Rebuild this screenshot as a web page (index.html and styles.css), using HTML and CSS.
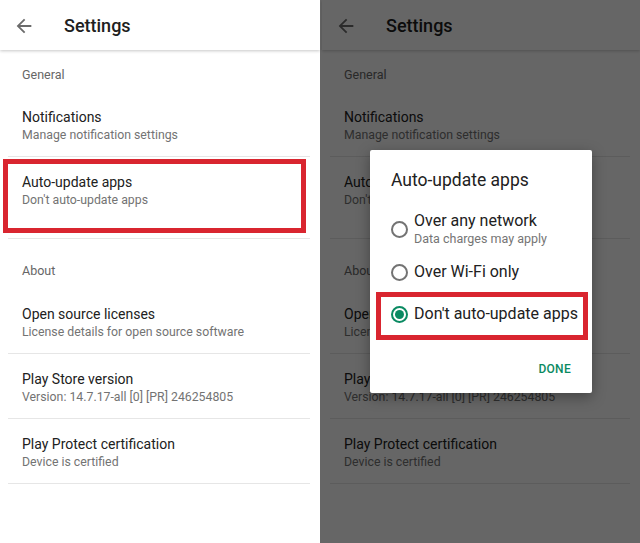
FILE: index.html
```html
<!DOCTYPE html>
<html lang="en">
<head>
  <meta charset="UTF-8">
  <meta name="viewport" content="width=device-width, initial-scale=1.0">
  <title>Settings</title>
  <link rel="stylesheet" href="styles.css">
</head>
<body>
  <!-- Left screen: settings list -->
  <div class="screen">
    <div class="appbar">
      <svg class="back" viewBox="0 0 24 24"><path d="M20 11H7.83l5.59-5.59L12 4l-8 8 8 8 1.41-1.41L7.83 13H20v-2z"/></svg>
      <div class="appbar-title">Settings</div>
    </div>
    <div class="section">General</div>
    <div class="item">
      <div class="item-title">Notifications</div>
      <div class="item-sub">Manage notification settings</div>
    </div>
    <div class="item tall highlight">
      <div class="item-title">Auto-update apps</div>
      <div class="item-sub">Don't auto-update apps</div>
    </div>
    <div class="section about">About</div>
    <div class="item">
      <div class="item-title">Open source licenses</div>
      <div class="item-sub">License details for open source software</div>
    </div>
    <div class="item">
      <div class="item-title">Play Store version</div>
      <div class="item-sub">Version: 14.7.17-all [0] [PR] 246254805</div>
    </div>
    <div class="item">
      <div class="item-title">Play Protect certification</div>
      <div class="item-sub">Device is certified</div>
    </div>
  </div>

  <!-- Right screen: same list with the dialog open -->
  <div class="screen dimmed">
    <div class="appbar">
      <svg class="back" viewBox="0 0 24 24"><path d="M20 11H7.83l5.59-5.59L12 4l-8 8 8 8 1.41-1.41L7.83 13H20v-2z"/></svg>
      <div class="appbar-title">Settings</div>
    </div>
    <div class="section">General</div>
    <div class="item">
      <div class="item-title">Notifications</div>
      <div class="item-sub">Manage notification settings</div>
    </div>
    <div class="item tall">
      <div class="item-title">Auto-update apps</div>
      <div class="item-sub">Don't auto-update apps</div>
    </div>
    <div class="section about">About</div>
    <div class="item">
      <div class="item-title">Open source licenses</div>
      <div class="item-sub">License details for open source software</div>
    </div>
    <div class="item">
      <div class="item-title">Play Store version</div>
      <div class="item-sub">Version: 14.7.17-all [0] [PR] 246254805</div>
    </div>
    <div class="item">
      <div class="item-title">Play Protect certification</div>
      <div class="item-sub">Device is certified</div>
    </div>

    <div class="scrim"></div>

    <div class="dialog">
      <div class="dialog-title">Auto-update apps</div>
      <div class="options">
        <div class="option two-line">
          <span class="radio"></span>
          <div>
            <div class="option-label">Over any network</div>
            <div class="option-sub">Data charges may apply</div>
          </div>
        </div>
        <div class="option">
          <span class="radio"></span>
          <div class="option-label">Over Wi-Fi only</div>
        </div>
        <div class="option highlight">
          <span class="radio checked"></span>
          <div class="option-label">Don't auto-update apps</div>
        </div>
      </div>
      <div class="actions">
        <span class="done">DONE</span>
      </div>
    </div>
  </div>
</body>
</html>
```

FILE: styles.css
```css
body {
  margin: 0;
  display: flex;
  width: 640px;
  height: 543px;
  overflow: hidden;
  font-family: Roboto, "Noto Sans", sans-serif;
  background-color: #fff;
}
.screen {
  position: relative;
  width: 320px;
  height: 543px;
  background-color: #fff;
  overflow: hidden;
}
.screen.dimmed {
  padding-left: 2px;
  box-sizing: border-box;
}

/* App bar */
.appbar {
  display: flex;
  align-items: center;
  height: 50px;
  padding-top: 1px;
  box-sizing: border-box;
  box-shadow: 0 1px 3px rgba(0, 0, 0, 0.22);
}
.back {
  width: 22px;
  height: 22px;
  margin-left: 13px;
  fill: #6b6b6b;
}
.appbar-title {
  margin-left: 29px;
  font-size: 18px;
  font-weight: 500;
  color: #202020;
}

/* List */
.section {
  padding: 17px 0 9px 22px;
  font-size: 12.5px;
  line-height: 16px;
  color: #666;
}
.section.about {
  padding-top: 24px;
  padding-bottom: 10px;
}
.item {
  position: relative;
  margin: 0 10px 0 8px;
  padding: 15px 0 13px 14px;
  border-bottom: 1px solid #e6e6e6;
}
.item.tall {
  padding-bottom: 30px;
}
.item-title {
  font-size: 14px;
  line-height: 20px;
  color: #212121;
}
.item-sub {
  font-size: 12.3px;
  line-height: 16px;
  color: #737373;
}

/* Red highlight boxes */
.highlight::after {
  content: "";
  position: absolute;
  border: 5px solid #d9252f;
}
.item.highlight::after {
  top: 2px;
  left: -5px;
  right: 4px;
  bottom: 5px;
}

/* Dialog */
.scrim {
  position: absolute;
  top: 0;
  left: 0;
  right: 0;
  bottom: 0;
  background-color: rgba(0, 0, 0, 0.6);
}
.dialog {
  position: absolute;
  top: 150px;
  left: 50px;
  width: 222px;
  height: 243px;
  box-sizing: border-box;
  padding: 18px 24px 16px 21px;
  background-color: #fff;
  border-radius: 2px;
  box-shadow: 0 4px 14px rgba(0, 0, 0, 0.35);
}
.dialog-title {
  font-size: 17.5px;
  line-height: 24px;
  color: #212121;
}
.options {
  margin-top: 15px;
}
.option {
  position: relative;
  display: flex;
  align-items: center;
  gap: 6px;
  min-height: 42px;
}
.option.two-line {
  min-height: 0;
  padding: 4px 0;
}
.option-label {
  font-size: 16px;
  line-height: 20px;
  color: #212121;
  white-space: nowrap;
}
.option-sub {
  font-size: 12.5px;
  line-height: 16px;
  color: #757575;
}
.radio {
  flex: none;
  width: 17px;
  height: 17px;
  box-sizing: border-box;
  border: 2px solid #737373;
  border-radius: 50%;
  display: flex;
  align-items: center;
  justify-content: center;
}
.radio.checked {
  border-color: #0a8a62;
}
.radio.checked::before {
  content: "";
  width: 9px;
  height: 9px;
  border-radius: 50%;
  background-color: #0a8a62;
}
.option.highlight::after {
  top: -1px;
  left: -15px;
  right: -20px;
  bottom: -5px;
}
.actions {
  display: flex;
  justify-content: flex-end;
  margin-top: 26px;
  margin-right: -3px;
}
.done {
  font-size: 12px;
  line-height: 16px;
  font-weight: 500;
  color: #0a8a62;
  letter-spacing: 0.3px;
}
```
